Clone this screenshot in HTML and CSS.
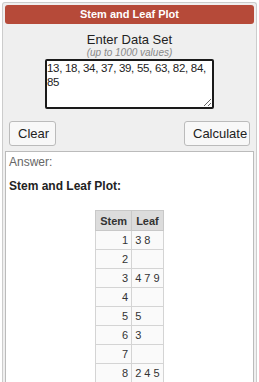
FILE: index.html
```html
<!DOCTYPE html>
<html>
<head>
<meta charset="utf-8">
<link rel="stylesheet" href="styles.css">
</head>
<body>
<div class="calc">
  <div class="title">Stem and Leaf Plot</div>
  <div class="inputs">
    <div class="label">Enter Data Set</div>
    <div class="hint">(up to 1000 values)</div>
    <textarea class="data">13, 18, 34, 37, 39, 55, 63, 82, 84, 85</textarea>
  </div>
  <div class="buttons">
    <button class="btn">Clear</button>
    <button class="btn">Calculate</button>
  </div>
  <div class="answer">
    <div class="answer-label">Answer:</div>
    <div class="answer-title">Stem and Leaf Plot:</div>
    <table class="plot">
      <thead><tr><th>Stem</th><th>Leaf</th></tr></thead>
      <tbody>
        <tr><td class="stem">1</td><td class="leaf">3 8</td></tr>
        <tr><td class="stem">2</td><td class="leaf"></td></tr>
        <tr><td class="stem">3</td><td class="leaf">4 7 9</td></tr>
        <tr><td class="stem">4</td><td class="leaf"></td></tr>
        <tr><td class="stem">5</td><td class="leaf">5</td></tr>
        <tr><td class="stem">6</td><td class="leaf">3</td></tr>
        <tr><td class="stem">7</td><td class="leaf"></td></tr>
        <tr><td class="stem">8</td><td class="leaf">2 4 5</td></tr>
      </tbody>
    </table>
  </div>
</div>
</body>
</html>
```
FILE: styles.css
```css
html, body {
  margin: 0;
  padding: 0;
  background: #fff;
  font-family: "Liberation Sans", Arial, sans-serif;
  height: 382px;
  overflow: hidden;
}
.calc {
  box-sizing: border-box;
  display: flex;
  flex-direction: column;
  margin: 2px 2px 0 2px;
  border: 1px solid #ccc;
  border-bottom: none;
  border-radius: 3px 3px 0 0;
  background: #efefef;
  padding: 2px 2px 0 2px;
  height: 380px;
  overflow: hidden;
}
.title {
  flex: none;
  height: 19px;
  line-height: 19px;
  background: #b64a39;
  color: #fff;
  font-weight: bold;
  font-size: 11px;
  text-align: center;
  border-radius: 3px;
}
.inputs {
  flex: none;
  display: flex;
  flex-direction: column;
  align-items: center;
  padding-top: 8px;
}
.label {
  font-size: 13px;
  color: #222;
  line-height: 15px;
}
.hint {
  font-size: 10px;
  font-style: italic;
  color: #888;
  line-height: 11px;
}
.data {
  box-sizing: border-box;
  width: 169px;
  height: 50px;
  margin-top: 1px;
  border: 2px solid #1a1a1a;
  border-radius: 2px;
  padding: 0;
  font-family: "Liberation Sans", Arial, sans-serif;
  font-size: 11.5px;
  letter-spacing: -0.3px;
  line-height: 14px;
  color: #222;
  background: #fff;
  resize: vertical;
  overflow: hidden;
}
.buttons {
  flex: none;
  display: flex;
  justify-content: space-between;
  padding: 12px 4px 0 4px;
}
.btn {
  box-sizing: border-box;
  height: 25px;
  padding: 0 8px;
  border: 1px solid #bbb;
  border-radius: 3px;
  background: #f8f8f8;
  font-family: "Liberation Sans", Arial, sans-serif;
  font-size: 13px;
  color: #222;
}
.btn:first-child {
  width: 47px;
}
.btn:last-child {
  width: 66px;
}
.answer {
  flex: 1;
  margin-top: 5px;
  background: #fff;
  border: 1px solid #bbb;
  border-bottom: none;
  padding: 3px 3px 0 3px;
}
.answer-label {
  font-size: 12px;
  color: #666;
  line-height: 14px;
}
.answer-title {
  font-size: 12px;
  font-weight: bold;
  color: #222;
  margin-top: 10px;
  line-height: 14px;
}
.plot {
  margin: 17px auto 0 auto;
  border-collapse: collapse;
  font-size: 11px;
  color: #333;
}
.plot th {
  background: #dcdcdc;
  border: 1px solid #c8c8c8;
  height: 19px;
  padding: 0 4px;
  font-weight: bold;
  color: #333;
}
.plot td {
  background: #fafafa;
  border: 1px solid #d4d4d4;
  height: 18px;
  padding: 0 3px;
}
.plot td.stem {
  width: 25px;
  text-align: right;
}
.plot td.leaf {
  width: 22px;
  text-align: left;
}
```
